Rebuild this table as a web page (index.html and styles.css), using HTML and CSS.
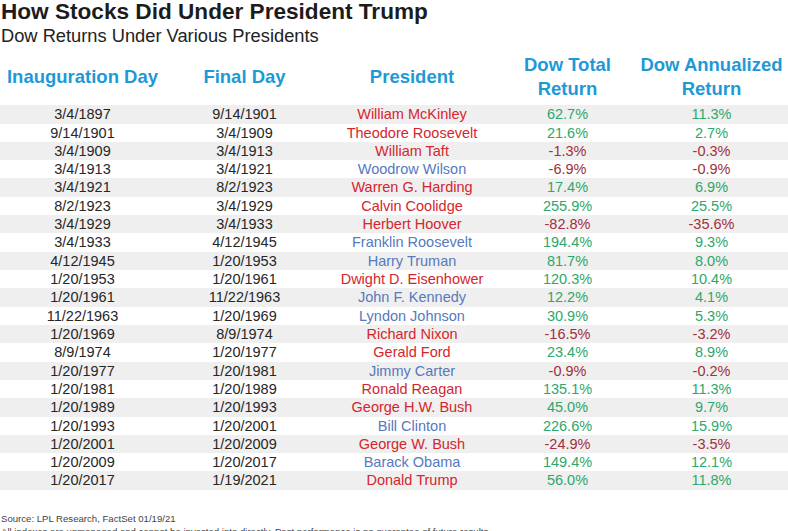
FILE: index.html
```html
<!DOCTYPE html>
<html>
<head>
<meta charset="utf-8">
<link rel="stylesheet" href="styles.css">
</head>
<body>
<div class="page">
  <h1 class="title">How Stocks Did Under President Trump</h1>
  <h2 class="subtitle">Dow Returns Under Various Presidents</h2>
  <div class="head">
    <div>Inauguration Day</div>
    <div>Final Day</div>
    <div>President</div>
    <div>Dow Total<br>Return</div>
    <div>Dow Annualized<br>Return</div>
  </div>
  <div class="rows">
    <div class="row"><span>3/4/1897</span><span>9/14/1901</span><span class="rep">William McKinley</span><span class="pos">62.7%</span><span class="pos">11.3%</span></div>
    <div class="row"><span>9/14/1901</span><span>3/4/1909</span><span class="rep">Theodore Roosevelt</span><span class="pos">21.6%</span><span class="pos">2.7%</span></div>
    <div class="row"><span>3/4/1909</span><span>3/4/1913</span><span class="rep">William Taft</span><span class="neg">-1.3%</span><span class="neg">-0.3%</span></div>
    <div class="row"><span>3/4/1913</span><span>3/4/1921</span><span class="dem">Woodrow Wilson</span><span class="neg">-6.9%</span><span class="neg">-0.9%</span></div>
    <div class="row"><span>3/4/1921</span><span>8/2/1923</span><span class="rep">Warren G. Harding</span><span class="pos">17.4%</span><span class="pos">6.9%</span></div>
    <div class="row"><span>8/2/1923</span><span>3/4/1929</span><span class="rep">Calvin Coolidge</span><span class="pos">255.9%</span><span class="pos">25.5%</span></div>
    <div class="row"><span>3/4/1929</span><span>3/4/1933</span><span class="rep">Herbert Hoover</span><span class="neg">-82.8%</span><span class="neg">-35.6%</span></div>
    <div class="row"><span>3/4/1933</span><span>4/12/1945</span><span class="dem">Franklin Roosevelt</span><span class="pos">194.4%</span><span class="pos">9.3%</span></div>
    <div class="row"><span>4/12/1945</span><span>1/20/1953</span><span class="dem">Harry Truman</span><span class="pos">81.7%</span><span class="pos">8.0%</span></div>
    <div class="row"><span>1/20/1953</span><span>1/20/1961</span><span class="rep">Dwight D. Eisenhower</span><span class="pos">120.3%</span><span class="pos">10.4%</span></div>
    <div class="row"><span>1/20/1961</span><span>11/22/1963</span><span class="dem">John F. Kennedy</span><span class="pos">12.2%</span><span class="pos">4.1%</span></div>
    <div class="row"><span>11/22/1963</span><span>1/20/1969</span><span class="dem">Lyndon Johnson</span><span class="pos">30.9%</span><span class="pos">5.3%</span></div>
    <div class="row"><span>1/20/1969</span><span>8/9/1974</span><span class="rep">Richard Nixon</span><span class="neg">-16.5%</span><span class="neg">-3.2%</span></div>
    <div class="row"><span>8/9/1974</span><span>1/20/1977</span><span class="rep">Gerald Ford</span><span class="pos">23.4%</span><span class="pos">8.9%</span></div>
    <div class="row"><span>1/20/1977</span><span>1/20/1981</span><span class="dem">Jimmy Carter</span><span class="neg">-0.9%</span><span class="neg">-0.2%</span></div>
    <div class="row"><span>1/20/1981</span><span>1/20/1989</span><span class="rep">Ronald Reagan</span><span class="pos">135.1%</span><span class="pos">11.3%</span></div>
    <div class="row"><span>1/20/1989</span><span>1/20/1993</span><span class="rep">George H.W. Bush</span><span class="pos">45.0%</span><span class="pos">9.7%</span></div>
    <div class="row"><span>1/20/1993</span><span>1/20/2001</span><span class="dem">Bill Clinton</span><span class="pos">226.6%</span><span class="pos">15.9%</span></div>
    <div class="row"><span>1/20/2001</span><span>1/20/2009</span><span class="rep">George W. Bush</span><span class="neg">-24.9%</span><span class="neg">-3.5%</span></div>
    <div class="row"><span>1/20/2009</span><span>1/20/2017</span><span class="dem">Barack Obama</span><span class="pos">149.4%</span><span class="pos">12.1%</span></div>
    <div class="row"><span>1/20/2017</span><span>1/19/2021</span><span class="rep">Donald Trump</span><span class="pos">56.0%</span><span class="pos">11.8%</span></div>
  </div>
  <div class="footer">
    <p>Source: LPL Research, FactSet 01/19/21</p>
    <p>All indexes are unmanaged and cannot be invested into directly. Past performance is no guarantee of future results.</p>
  </div>
</div>
</body>
</html>
```
FILE: styles.css
```css
html, body {
  margin: 0;
  padding: 0;
  background: #ffffff;
}
body {
  font-family: "Liberation Sans", Arial, sans-serif;
  width: 788px;
  height: 531px;
  overflow: hidden;
}
.page {
  display: flex;
  flex-direction: column;
}
.title {
  margin: 0;
  padding-left: 1px;
  font-size: 22.6px;
  line-height: 24px;
  font-weight: bold;
  color: #1c1c1c;
}
.subtitle {
  margin: 1px 0 0;
  padding-left: 1px;
  font-size: 18.3px;
  line-height: 22px;
  font-weight: normal;
  color: #222222;
}
.head, .row {
  display: grid;
  grid-template-columns: 165px 159px 176px 135px 153px;
  text-align: center;
}
.head {
  margin-top: 5.6px;
  align-items: center;
  font-size: 18.5px;
  line-height: 24px;
  font-weight: bold;
  color: #1d9ad6;
}
.rows {
  margin-top: 4.6px;
  display: flex;
  flex-direction: column;
}
.row {
  height: 18.32px;
  font-size: 14.5px;
  line-height: 18.32px;
  color: #262626;
}
.row:nth-child(odd) {
  background: #efefef;
}
.rep { color: #d5262d; }
.dem { color: #5779bd; }
.pos { color: #2ea76a; }
.neg { color: #a0303b; }
.footer {
  margin-top: 22px;
  font-size: 9.6px;
  line-height: 13px;
  color: #444444;
}
.footer p {
  margin: 0;
  padding-left: 1px;
  white-space: nowrap;
}
```
